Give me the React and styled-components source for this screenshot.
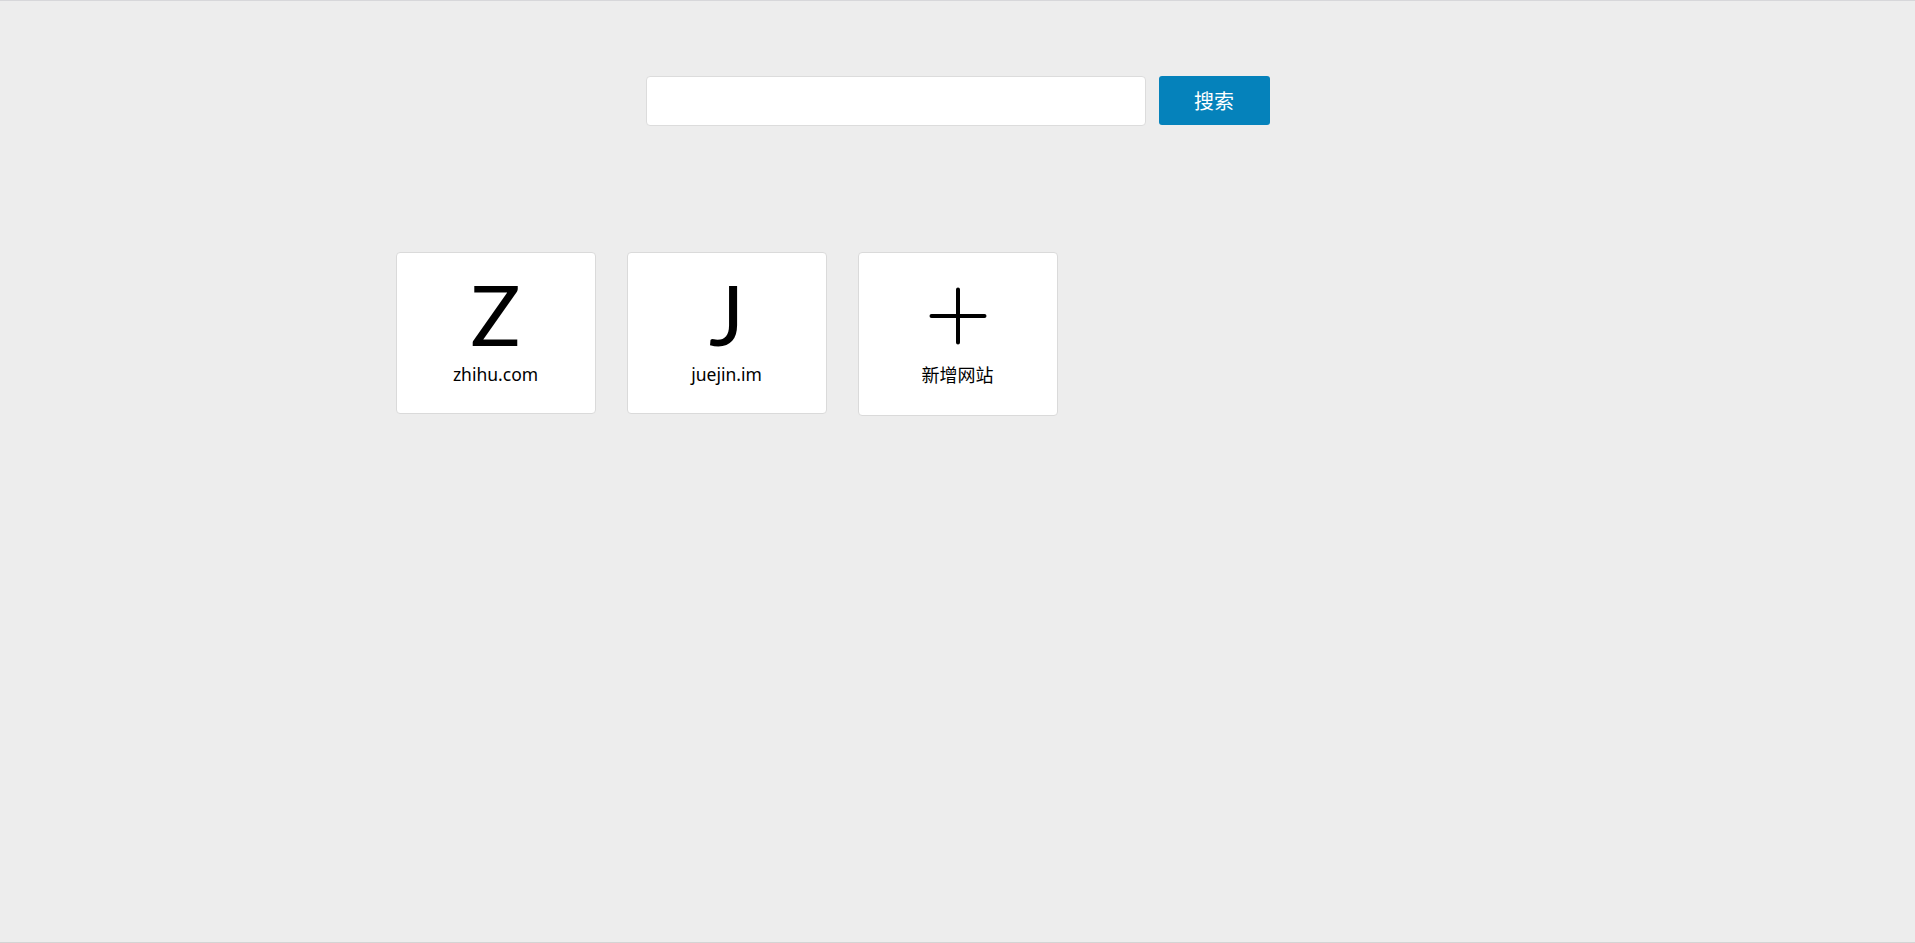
import React, { useState } from "react"
import styled, { createGlobalStyle } from "styled-components"

const GlobalStyle = createGlobalStyle`
	html, body {
		margin: 0;
		padding: 0;
		height: 100%;
		background: #ededed;
		font-family: "Noto Sans", "Noto Sans CJK SC", sans-serif;
	}
	#root {
		min-height: 100%;
	}
`

const Page = styled.div`
	min-height: 943px;
	box-sizing: border-box;
	border-top: 1px solid #d7d7da;
	border-bottom: 1px solid #d4d4d4;
	background: #ededed;
`

const SearchForm = styled.form`
	display: flex;
	justify-content: center;
	gap: 13px;
	padding-top: 75px;
`

const SearchInput = styled.input`
	width: 500px;
	height: 50px;
	box-sizing: border-box;
	border: 1px solid #dcdcdc;
	border-radius: 4px;
	background: #fff;
	padding: 0 12px;
	font-size: 18px;
	outline: none;
`

const SearchButton = styled.button`
	width: 111px;
	height: 49px;
	border: none;
	border-radius: 3px;
	background: #0582bb;
	color: #fff;
	font-family: "Noto Sans CJK SC", sans-serif;
	font-size: 20px;
	cursor: pointer;
`

const SiteList = styled.ul`
	list-style: none;
	margin: 126px auto 0;
	padding: 0;
	width: 1124px;
	display: flex;
	flex-wrap: wrap;
	align-items: flex-start;
	gap: 31px;
`

const SiteCard = styled.li`
	width: 200px;
	height: ${(props) => (props.$tall ? 164 : 162)}px;
	box-sizing: border-box;
	border: 1px solid #dadada;
	border-radius: 4px;
	background: #fff;
	display: flex;
	flex-direction: column;
	align-items: center;
	cursor: pointer;
`

const Logo = styled.div`
	margin-top: 20px;
	font-family: Lato, "Noto Sans", sans-serif;
	font-size: 83px;
	line-height: 1;
	height: 83px;
	color: #000;
`

const PlusBox = styled.div`
	margin-top: 33px;
	width: 60px;
	height: 60px;
	display: flex;
	align-items: center;
	justify-content: center;
`

const SiteName = styled.div`
	margin-top: 6px;
	font-family: "Noto Sans", "Noto Sans CJK SC", sans-serif;
	font-size: 17.5px;
	color: #000;
`

const AddName = styled(SiteName)`
	margin-top: 15px;
	font-size: 18px;
`

const PlusIcon = () => (
	<svg width="60" height="60" viewBox="0 0 60 60">
		<path d="M30 3.5 V56.5 M3.5 30 H56.5" stroke="#000" strokeWidth="4" strokeLinecap="round" fill="none" />
	</svg>
)

const App = () => {
	const [query, setQuery] = useState("")
	const sites = [
		{ logo: "Z", url: "zhihu.com" },
		{ logo: "J", url: "juejin.im" },
	]

	return (
		<>
			<GlobalStyle />
			<Page>
				<SearchForm onSubmit={(e) => e.preventDefault()}>
					<SearchInput value={query} onChange={(e) => setQuery(e.target.value)} />
					<SearchButton type="submit">搜索</SearchButton>
				</SearchForm>
				<SiteList>
					{sites.map((site) => (
						<SiteCard key={site.url}>
							<Logo>{site.logo}</Logo>
							<SiteName>{site.url}</SiteName>
						</SiteCard>
					))}
					<SiteCard $tall>
						<PlusBox>
							<PlusIcon />
						</PlusBox>
						<AddName>新增网站</AddName>
					</SiteCard>
				</SiteList>
			</Page>
		</>
	)
}

export default App
